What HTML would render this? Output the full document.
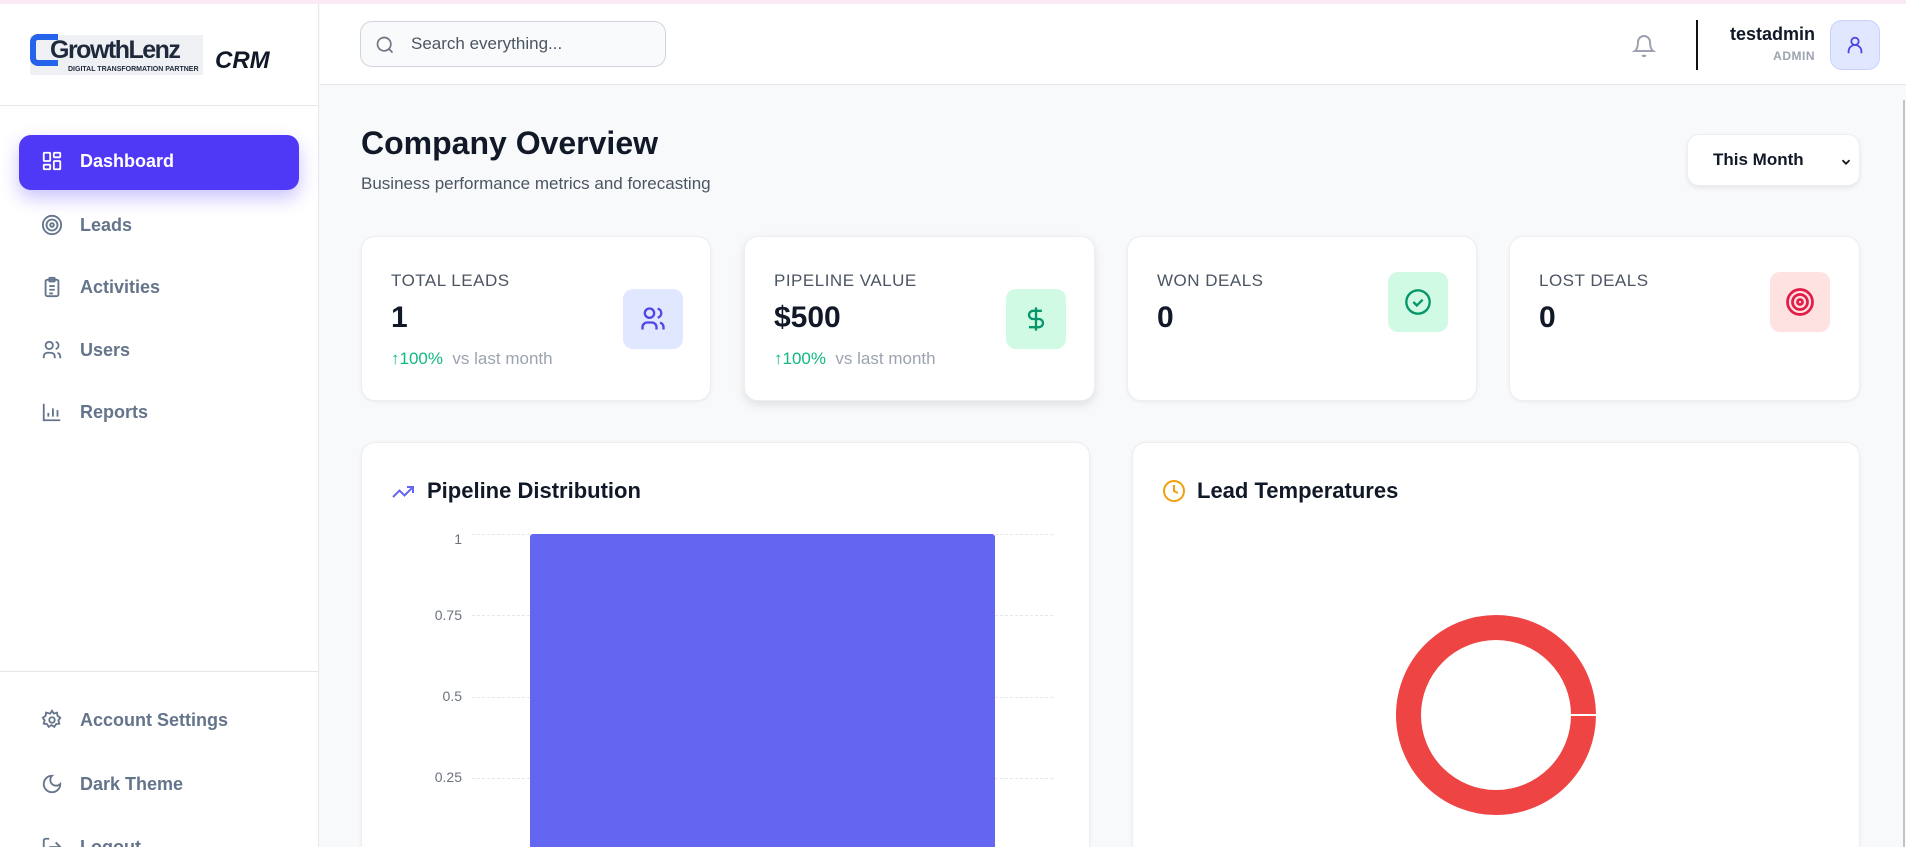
<!DOCTYPE html>
<html style="width:1906px;height:847px;overflow:hidden"><head><meta charset="utf-8"><style>
*{box-sizing:border-box;margin:0;padding:0}
body{width:1906px;height:847px;overflow:hidden;background:#f8f9fb;font-family:"Liberation Sans",sans-serif;position:relative;color:#111827}
.abs{position:absolute}
.topline{left:0;top:0;width:1906px;height:4px;background:#fbeaf5}
.side{left:0;top:4px;width:319px;height:843px;background:#fff;border-right:1px solid #e5e7eb;overflow:hidden}
.nav{position:absolute;left:41px;display:flex;align-items:center;font-size:18px;font-weight:bold;color:#64748b}
.nav svg{width:22px;height:22px;margin-right:17px}
.hdr{left:320px;top:4px;width:1586px;height:81px;background:#fff;border-bottom:1px solid #e5e7eb}
.card{position:absolute;background:#fff;border:1px solid #eceef1;border-radius:14px;box-shadow:0 1px 3px rgba(0,0,0,.06)}
.lbl{position:absolute;left:29px;top:34px;font-size:17px;color:#4b5563;letter-spacing:.5px}
.val{position:absolute;left:29px;top:64px;font-size:30px;font-weight:bold;color:#111827}
.chg{position:absolute;left:29px;top:112px;font-size:17px;color:#9ca3af}
.chg b{color:#10b981;font-weight:normal}
.ib{position:absolute;width:60px;height:60px;border-radius:10px;display:flex;align-items:center;justify-content:center}
.ylab{position:absolute;right:0;font-size:14px;color:#6b7280}
.grid{position:absolute;left:472px;width:581px;border-top:1px dashed #e5e7eb}
</style></head><body>
<div class="abs topline"></div>
<div class="abs side">
 <div style="position:absolute;left:0;top:101px;width:318px;border-top:1px solid #e5e7eb"></div>
 <div style="position:absolute;left:30px;top:31px;width:173px;height:40px;background:#eef0f3"></div>
 <div style="position:absolute;left:30px;top:30px;width:28px;height:32px;border:6px solid #2563eb;border-right:none;border-radius:8px 0 0 8px"></div>
 <div style="position:absolute;left:50px;top:32px;font-size:25px;font-weight:bold;color:#1e293b;letter-spacing:-1.5px">GrowthLenz</div>
 <div style="position:absolute;left:68px;top:62px;font-size:7px;font-weight:bold;color:#1e293b">DIGITAL TRANSFORMATION PARTNER</div>
 <div style="position:absolute;left:215px;top:43px;font-size:24px;font-weight:bold;font-style:italic;color:#111827">CRM</div>
 <div style="position:absolute;left:19px;top:131px;width:280px;height:55px;background:#4f39f6;border-radius:12px;box-shadow:0 8px 18px rgba(79,57,246,.3)"></div>
 <div class="nav" style="top:146px;color:#fff"><svg viewBox="0 0 24 24" fill="none" stroke="#fff" stroke-width="2"><rect x="3" y="3" width="7" height="9" rx="1"/><rect x="14" y="3" width="7" height="5" rx="1"/><rect x="14" y="12" width="7" height="9" rx="1"/><rect x="3" y="16" width="7" height="5" rx="1"/></svg>Dashboard</div>
 <div class="nav" style="top:210px"><svg viewBox="0 0 24 24" fill="none" stroke="#64748b" stroke-width="2"><circle cx="12" cy="12" r="10"/><circle cx="12" cy="12" r="6"/><circle cx="12" cy="12" r="2"/></svg>Leads</div>
 <div class="nav" style="top:272px"><svg viewBox="0 0 24 24" fill="none" stroke="#64748b" stroke-width="2"><rect x="5" y="4" width="14" height="18" rx="2"/><rect x="9" y="2" width="6" height="4" rx="1"/><path d="M9 11h6M9 15h6M9 19h4"/></svg>Activities</div>
 <div class="nav" style="top:335px"><svg viewBox="0 0 24 24" fill="none" stroke="#64748b" stroke-width="2"><circle cx="9" cy="7" r="4"/><path d="M3 21v-2a4 4 0 014-4h4a4 4 0 014 4v2M16 3.1a4 4 0 010 7.8M21 21v-2a4 4 0 00-3-3.9"/></svg>Users</div>
 <div class="nav" style="top:397px"><svg viewBox="0 0 24 24" fill="none" stroke="#64748b" stroke-width="2"><path d="M3 3v18h18M8 17v-4M13 17V8M18 17v-7"/></svg>Reports</div>
 <div style="position:absolute;left:0;top:667px;width:318px;border-top:1px solid #e5e7eb"></div>
 <div class="nav" style="top:705px"><svg viewBox="0 0 24 24" fill="none" stroke="#64748b" stroke-width="2"><circle cx="12" cy="12" r="3"/><path d="M12 2l2 3 3.5-1 .5 3.5 3 2-2 3 1 3.5-3.5.5-2 3-3-2-3 2-2-3-3.5-.5 1-3.5-2-3 3-2 .5-3.5L10 5z"/></svg>Account Settings</div>
 <div class="nav" style="top:769px"><svg viewBox="0 0 24 24" fill="none" stroke="#64748b" stroke-width="2"><path d="M12 3a6 6 0 009 9 9 9 0 11-9-9z"/></svg>Dark Theme</div>
 <div class="nav" style="top:832px"><svg viewBox="0 0 24 24" fill="none" stroke="#64748b" stroke-width="2"><path d="M9 21H5a2 2 0 01-2-2V5a2 2 0 012-2h4M16 17l5-5-5-5M21 12H9"/></svg>Logout</div>
</div>
<div class="abs hdr">
 <div style="position:absolute;left:40px;top:17px;width:306px;height:46px;border:1px solid #d1d5db;border-radius:12px;background:#f9fafb"></div>
 <svg style="position:absolute;left:55px;top:31px" width="20" height="20" viewBox="0 0 24 24" fill="none" stroke="#6b7280" stroke-width="2"><circle cx="11" cy="11" r="8"/><path d="M21 21l-4.3-4.3"/></svg>
 <div style="position:absolute;left:91px;top:30px;font-size:17px;color:#4b5563">Search everything...</div>
 <svg style="position:absolute;left:1312px;top:30px" width="24" height="24" viewBox="0 0 24 24" fill="none" stroke="#9ca3af" stroke-width="2"><path d="M6 8a6 6 0 0112 0c0 7 3 9 3 9H3s3-2 3-9M10.3 21a1.9 1.9 0 003.4 0"/></svg>
 <div style="position:absolute;left:1376px;top:16px;width:2px;height:50px;background:#111"></div>
 <div style="position:absolute;right:91px;top:20px;font-size:18px;font-weight:bold;color:#111827">testadmin</div>
 <div style="position:absolute;right:91px;top:45px;font-size:12px;font-weight:bold;color:#9ca3af;letter-spacing:.5px">ADMIN</div>
 <div style="position:absolute;left:1510px;top:16px;width:50px;height:50px;border:1px solid #c7d2fe;background:#e0e7ff;border-radius:12px;display:flex;align-items:center;justify-content:center"><svg width="22" height="22" viewBox="0 0 24 24" fill="none" stroke="#4f46e5" stroke-width="2"><circle cx="12" cy="8" r="4"/><path d="M5 21v-2a5 5 0 0114 0v2"/></svg></div>
</div>
<div class="abs" style="left:1903px;top:100px;width:2px;height:747px;background:#c4c4c4"></div>
<div class="abs" style="left:361px;top:125px;font-size:32px;font-weight:bold;color:#111827">Company Overview</div>
<div class="abs" style="left:361px;top:174px;font-size:17px;color:#4b5563">Business performance metrics and forecasting</div>
<div class="card" style="left:1687px;top:134px;width:173px;height:52px;border-radius:12px;box-shadow:0 2px 4px rgba(0,0,0,.08)"><div style="position:absolute;left:25px;top:15px;font-size:17px;font-weight:bold;color:#111827">This Month</div><svg style="position:absolute;right:6px;top:20px" width="14" height="14" viewBox="0 0 24 24" fill="none" stroke="#111" stroke-width="3"><path d="M6 9l6 6 6-6"/></svg></div>

<div class="card" style="left:361px;top:236px;width:350px;height:165px"><div class="lbl">TOTAL LEADS</div><div class="val">1</div><div class="chg"><b>↑100%</b>&nbsp; vs last month</div><div class="ib" style="left:261px;top:52px;background:#e0e7ff"><svg width="28" height="28" viewBox="0 0 24 24" fill="none" stroke="#4f46e5" stroke-width="2"><circle cx="9" cy="7" r="4"/><path d="M3 21v-2a4 4 0 014-4h4a4 4 0 014 4v2M16 3.1a4 4 0 010 7.8M21 21v-2a4 4 0 00-3-3.9"/></svg></div></div>
<div class="card" style="left:744px;top:236px;width:351px;height:165px;box-shadow:0 4px 10px rgba(0,0,0,.1)"><div class="lbl">PIPELINE VALUE</div><div class="val">$500</div><div class="chg"><b>↑100%</b>&nbsp; vs last month</div><div class="ib" style="left:261px;top:52px;background:#d1fae5"><svg width="28" height="28" viewBox="0 0 24 24" fill="none" stroke="#059669" stroke-width="2"><path d="M12 2v20M17 5H9.5a3.5 3.5 0 000 7h5a3.5 3.5 0 010 7H6"/></svg></div></div>
<div class="card" style="left:1127px;top:236px;width:350px;height:165px"><div class="lbl">WON DEALS</div><div class="val">0</div><div class="ib" style="left:260px;top:35px;background:#d1fae5"><svg width="28" height="28" viewBox="0 0 24 24" fill="none" stroke="#059669" stroke-width="2"><circle cx="12" cy="12" r="10"/><path d="M8 12l3 3 5-5"/></svg></div></div>
<div class="card" style="left:1509px;top:236px;width:351px;height:165px"><div class="lbl">LOST DEALS</div><div class="val">0</div><div class="ib" style="left:260px;top:35px;background:#fee2e2"><svg width="30" height="30" viewBox="0 0 24 24" fill="none" stroke="#e11d48" stroke-width="2.2"><circle cx="12" cy="12" r="10"/><circle cx="12" cy="12" r="6"/><circle cx="12" cy="12" r="2"/></svg></div></div>

<div class="card" style="left:361px;top:442px;width:729px;height:420px"></div>
<svg class="abs" style="left:391px;top:480px" width="24" height="24" viewBox="0 0 24 24" fill="none" stroke="#6366f1" stroke-width="2"><path d="M22 7l-8.5 8.5-5-5L2 17M16 7h6v6"/></svg>
<div class="abs" style="left:427px;top:478px;font-size:22px;font-weight:bold">Pipeline Distribution</div>
<div class="abs" style="left:400px;top:0;width:62px;height:847px">
 <div class="ylab" style="top:531px">1</div><div class="ylab" style="top:607px">0.75</div><div class="ylab" style="top:688px">0.5</div><div class="ylab" style="top:769px">0.25</div>
</div>
<div class="grid" style="top:534px"></div><div class="grid" style="top:615px"></div><div class="grid" style="top:697px"></div><div class="grid" style="top:778px"></div>
<div class="abs" style="left:530px;top:534px;width:465px;height:313px;background:#6366f1;border-radius:3px 3px 0 0"></div>

<div class="card" style="left:1132px;top:442px;width:728px;height:420px"></div>
<svg class="abs" style="left:1162px;top:479px" width="24" height="24" viewBox="0 0 24 24" fill="none" stroke="#f59e0b" stroke-width="2"><circle cx="12" cy="12" r="10"/><path d="M12 6v6l4 2"/></svg>
<div class="abs" style="left:1197px;top:478px;font-size:22px;font-weight:bold">Lead Temperatures</div>
<svg class="abs" style="left:1396px;top:615px" width="200" height="200" viewBox="0 0 200 200"><circle cx="100" cy="100" r="87.5" fill="none" stroke="#ef4444" stroke-width="25"/><line x1="175" y1="100" x2="200" y2="100" stroke="#fff" stroke-width="2"/></svg>
</body></html>
